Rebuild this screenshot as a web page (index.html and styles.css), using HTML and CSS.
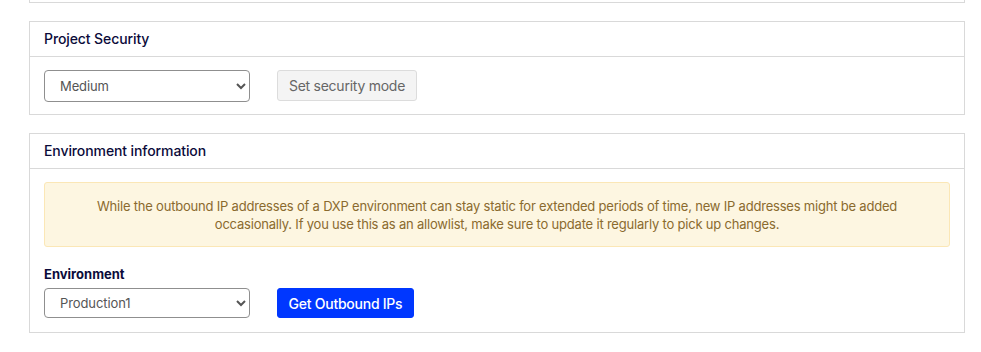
FILE: index.html
```html
<!DOCTYPE html>
<html>
<head>
    <meta charset="UTF-8">
    <title>Project settings</title>
    <link rel="stylesheet" href="styles.css">
</head>
<body>
<div class="page">
    <div class="card card-stub"></div>

    <div class="card">
        <div class="card-header">Project Security</div>
        <div class="card-body">
            <div class="row">
                <select class="field">
                    <option>Low</option>
                    <option selected>Medium</option>
                    <option>High</option>
                </select>
                <button class="btn btn-light">Set security mode</button>
            </div>
        </div>
    </div>

    <div class="card">
        <div class="card-header">Environment information</div>
        <div class="card-body card-body-env">
            <div class="alert">
                While the outbound IP addresses of a DXP environment can stay static for extended periods of time, new IP addresses might be added occasionally. If you use this as an allowlist, make sure to update it regularly to pick up changes.
            </div>
            <label class="label">Environment</label>
            <div class="row">
                <select class="field field-sm">
                    <option selected>Production1</option>
                    <option>Preproduction</option>
                    <option>Integration</option>
                </select>
                <button class="btn btn-primary">Get Outbound IPs</button>
            </div>
        </div>
    </div>
</div>
</body>
</html>
```

FILE: styles.css
```css
body {
    margin: 0;
    font-family: 'Inter', 'Liberation Sans', sans-serif;
    background-color: #ffffff;
    color: #0b0b3a;
}
.page {
    padding: 0 16px 0 29px;
}
.card {
    border: 1px solid #d9d9d9;
    margin-top: 18px;
}
.card-stub {
    border-top: none;
    height: 2px;
    margin-top: 0;
}
.card-header {
    height: 34px;
    line-height: 34px;
    padding: 0 14px;
    font-size: 14px;
    font-weight: 500;
    letter-spacing: -0.1px;
    border-bottom: 1px solid #d9d9d9;
}
.card-body {
    padding: 13px 14px 12px 14px;
}
.card-body-env {
    padding-bottom: 14px;
}
.row {
    display: flex;
    align-items: flex-start;
    gap: 27px;
}
.field {
    width: 206px;
    height: 32px;
    padding: 0 9px 0 11px;
    font-family: 'Inter', 'Liberation Sans', sans-serif;
    font-size: 13px;
    letter-spacing: -0.1px;
    color: #555555;
    background-color: #ffffff;
    border: 1px solid #8f8f8f;
    border-radius: 4px;
}
.field-sm {
    height: 30px;
}
.btn {
    height: 31px;
    padding: 0;
    font-family: 'Inter', 'Liberation Sans', sans-serif;
    font-size: 14px;
    letter-spacing: -0.25px;
    white-space: nowrap;
    border-radius: 3px;
    cursor: pointer;
}
.btn-light {
    width: 140px;
    background-color: #f4f4f4;
    border: 1px solid #dcdcdc;
    color: #666666;
}
.btn-primary {
    width: 137px;
    height: 30px;
    background-color: #0037ff;
    border: 1px solid #0037ff;
    color: #ffffff;
    font-weight: 500;
}
.alert {
    padding: 14px 20px 13px 20px;
    margin-bottom: 19px;
    font-size: 13px;
    line-height: 18px;
    letter-spacing: -0.2px;
    text-align: center;
    color: #8a6a2e;
    background-color: #fdf6e1;
    border: 1px solid #fbe7b6;
    border-radius: 3px;
}
.label {
    display: block;
    margin-bottom: 6px;
    font-size: 13px;
    font-weight: 700;
    color: #0b0b3a;
}
```
